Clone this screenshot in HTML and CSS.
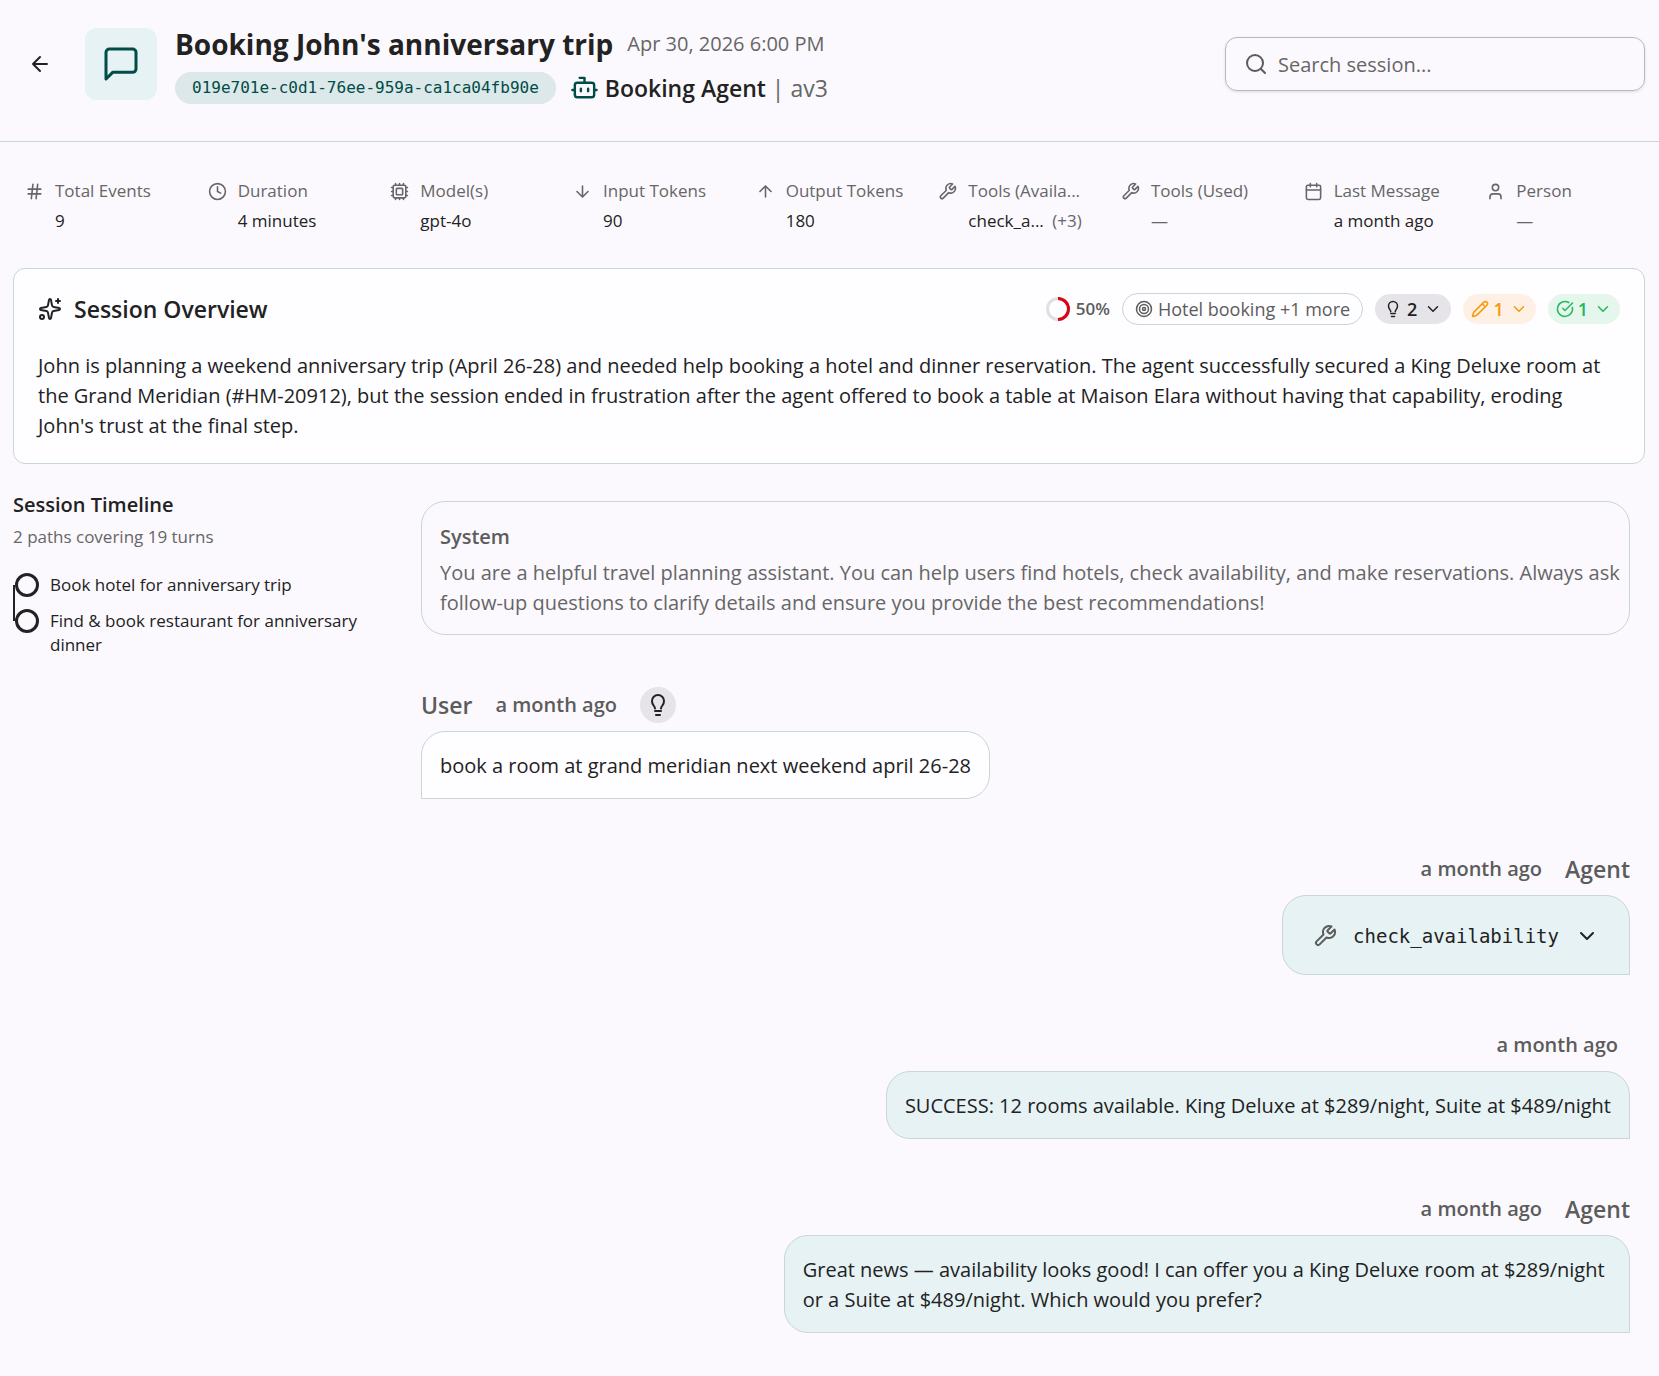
FILE: index.html
```html
<!DOCTYPE html>
<html lang="en">
<head>
    <meta charset="utf-8">
    <meta name="viewport" content="width=device-width, initial-scale=1">
    <title>Booking John's anniversary trip</title>
    <link rel="stylesheet" href="styles.css">
</head>
<body>
    <!-- icons used more than once -->
    <svg class="sprite" aria-hidden="true">
        <symbol id="wrench" viewBox="0 0 24 24"><path d="M14.7 6.3a1 1 0 0 0 0 1.4l1.6 1.6a1 1 0 0 0 1.4 0l3.77-3.77a6 6 0 0 1-7.94 7.94l-6.91 6.91a2.12 2.12 0 0 1-3-3l6.91-6.91a6 6 0 0 1 7.94-7.94l-3.76 3.76z"/></symbol>
        <symbol id="bulb" viewBox="0 0 24 24"><path d="M9 15.500c-.1-1.300-.5-2-1.300-2.900C6.600 11.300 6 10 6 8a6 6 0 0 1 12 0c0 2-.6 3.300-1.700 4.600-.8.900-1.200 1.600-1.300 2.900M9 18h6M10 22h4"/></symbol>
        <symbol id="chevron" viewBox="0 0 24 24"><path d="m6 9 6 6 6-6"/></symbol>
    </svg>

    <header class="header">
        <button class="back" aria-label="Back">
            <svg class="icon" viewBox="0 0 24 24"><path d="m12 19-7-7 7-7M19 12H5"/></svg>
        </button>
        <div class="session-icon">
            <svg class="icon" viewBox="0 0 24 24"><path d="M21 15a2 2 0 0 1-2 2H7l-4 4V5a2 2 0 0 1 2-2h14a2 2 0 0 1 2 2z"/></svg>
        </div>
        <div class="heading">
            <div class="title-row">
                <h1>Booking John's anniversary trip</h1>
                <span class="date">Apr 30, 2026 6:00 PM</span>
            </div>
            <div class="agent-row">
                <span class="session-id">019e701e-c0d1-76ee-959a-ca1ca04fb90e</span>
                <span class="agent">
                    <svg class="icon" viewBox="0 0 24 24"><path d="M12 8V4H8M2 14h2M20 14h2M15 13v2M9 13v2"/><rect x="4" y="8" width="16" height="12" rx="2"/></svg>
                    <span><b>Booking Agent</b> | av3</span>
                </span>
            </div>
        </div>
        <label class="search">
            <svg class="icon" viewBox="0 0 24 24"><circle cx="11" cy="11" r="8"/><path d="m21 21-4.300-4.300"/></svg>
            <input type="search" placeholder="Search session..." aria-label="Search session">
        </label>
    </header>

    <main class="page">
        <dl class="stats">
            <div class="stat">
                <svg class="icon" viewBox="0 0 24 24"><path d="M4 9h16M4 15h16M10 3 8 21M16 3l-2 18"/></svg>
                <dt>Total Events</dt>
                <dd>9</dd>
            </div>
            <div class="stat">
                <svg class="icon" viewBox="0 0 24 24"><circle cx="12" cy="12" r="10"/><path d="M12 6v6l4 2"/></svg>
                <dt>Duration</dt>
                <dd>4 minutes</dd>
            </div>
            <div class="stat">
                <svg class="icon" viewBox="0 0 24 24"><rect x="4" y="4" width="16" height="16" rx="2"/><rect x="8" y="8" width="8" height="8" rx="1"/><path d="M12 20v2M12 2v2M17 20v2M17 2v2M2 12h2M2 17h2M2 7h2M20 12h2M20 17h2M20 7h2M7 20v2M7 2v2"/></svg>
                <dt>Model(s)</dt>
                <dd>gpt-4o</dd>
            </div>
            <div class="stat">
                <svg class="icon" viewBox="0 0 24 24"><path d="M12 5v14M19 12l-7 7-7-7"/></svg>
                <dt>Input Tokens</dt>
                <dd>90</dd>
            </div>
            <div class="stat">
                <svg class="icon" viewBox="0 0 24 24"><path d="M12 19V5M5 12l7-7 7 7"/></svg>
                <dt>Output Tokens</dt>
                <dd>180</dd>
            </div>
            <div class="stat">
                <svg class="icon"><use href="#wrench"/></svg>
                <dt>Tools (Availa...</dt>
                <dd>check_a... <span class="more">(+3)</span></dd>
            </div>
            <div class="stat">
                <svg class="icon"><use href="#wrench"/></svg>
                <dt>Tools (Used)</dt>
                <dd class="empty">—</dd>
            </div>
            <div class="stat">
                <svg class="icon" viewBox="0 0 24 24"><rect x="3" y="4" width="18" height="18" rx="2"/><path d="M8 2v4M16 2v4M3 10h18"/></svg>
                <dt>Last Message</dt>
                <dd>a month ago</dd>
            </div>
            <div class="stat">
                <svg class="icon" viewBox="0 0 24 24"><circle cx="12" cy="7" r="4"/><path d="M19 21v-2a4 4 0 0 0-4-4H9a4 4 0 0 0-4 4v2"/></svg>
                <dt>Person</dt>
                <dd class="empty">—</dd>
            </div>
        </dl>

        <section class="overview">
            <div class="overview-head">
                <svg class="icon" viewBox="0 0 24 24"><path d="M11.017 2.814a1 1 0 0 1 1.966 0l1.051 5.558a2 2 0 0 0 1.594 1.594l5.558 1.051a1 1 0 0 1 0 1.966l-5.558 1.051a2 2 0 0 0-1.594 1.594l-1.051 5.558a1 1 0 0 1-1.966 0l-1.051-5.558a2 2 0 0 0-1.594-1.594l-5.558-1.051a1 1 0 0 1 0-1.966l5.558-1.051a2 2 0 0 0 1.594-1.594zM20 2v4M22 4h-4"/><circle cx="4" cy="20" r="2"/></svg>
                <h2>Session Overview</h2>
                <div class="badges">
                    <span class="score">
                        <svg class="ring" viewBox="0 0 24 24"><circle cx="12" cy="12" r="10.500"/><path d="M12 1.500a10.500 10.500 0 0 1 0 21"/></svg>
                        50%
                    </span>
                    <button class="topic">
                        <svg class="icon" viewBox="0 0 24 24"><circle cx="12" cy="12" r="10"/><circle cx="12" cy="12" r="6"/><circle cx="12" cy="12" r="2"/></svg>
                        Hotel booking +1 more
                    </button>
                    <button class="badge">
                        <svg class="icon"><use href="#bulb"/></svg>2<svg class="icon chevron"><use href="#chevron"/></svg>
                    </button>
                    <button class="badge badge-edit">
                        <svg class="icon" viewBox="0 0 24 24"><path d="M21.174 6.812a1 1 0 0 0-3.986-3.987L3.842 16.174a2 2 0 0 0-.5.83l-1.321 4.352a.5.5 0 0 0 .623.622l4.353-1.320a2 2 0 0 0 .83-.497zM15 5l4 4"/></svg>1<svg class="icon chevron"><use href="#chevron"/></svg>
                    </button>
                    <button class="badge badge-done">
                        <svg class="icon" viewBox="0 0 24 24"><path d="M21.801 10A10 10 0 1 1 17 3.335M9 11l3 3L22 4"/></svg>1<svg class="icon chevron"><use href="#chevron"/></svg>
                    </button>
                </div>
            </div>
            <p>John is planning a weekend anniversary trip (April 26-28) and needed help booking a hotel and dinner reservation. The agent successfully secured a King Deluxe room at the Grand Meridian (#HM-20912), but the session ended in frustration after the agent offered to book a table at Maison Elara without having that capability, eroding John's trust at the final step.</p>
        </section>

        <div class="columns">
            <aside class="timeline">
                <h3>Session Timeline</h3>
                <p>2 paths covering 19 turns</p>
                <ol>
                    <li>Book hotel for anniversary trip</li>
                    <li>Find &amp; book restaurant for anniversary dinner</li>
                </ol>
            </aside>

            <div class="chat">
                <section class="system">
                    <h3>System</h3>
                    <p>You are a helpful travel planning assistant. You can help users find hotels, check availability, and make reservations. Always ask follow-up questions to clarify details and ensure you provide the best recommendations!</p>
                </section>

                <article class="message">
                    <div class="meta">
                        <span class="who">User</span>
                        <time>a month ago</time>
                        <button class="insight" aria-label="Insight"><svg class="icon"><use href="#bulb"/></svg></button>
                    </div>
                    <div class="bubble">book a room at grand meridian next weekend april 26-28</div>
                </article>

                <article class="message from-agent">
                    <div class="meta">
                        <time>a month ago</time>
                        <span class="who">Agent</span>
                    </div>
                    <div class="bubble">
                        <button class="tool">
                            <svg class="icon"><use href="#wrench"/></svg>
                            check_availability
                            <svg class="icon chevron"><use href="#chevron"/></svg>
                        </button>
                    </div>
                </article>

                <article class="message from-agent">
                    <div class="meta unnamed">
                        <time>a month ago</time>
                    </div>
                    <div class="bubble">SUCCESS: 12 rooms available. King Deluxe at $289/night, Suite at $489/night</div>
                </article>

                <article class="message from-agent">
                    <div class="meta">
                        <time>a month ago</time>
                        <span class="who">Agent</span>
                    </div>
                    <div class="bubble">Great news — availability looks good! I can offer you a King Deluxe room at $289/night or a Suite at $489/night. Which would you prefer?</div>
                </article>
            </div>
        </div>
    </main>
</body>
</html>
```

FILE: styles.css
```css
*, *::before, *::after {
    box-sizing: border-box;
}
body {
    margin: 0;
    background: #fbf9fd;
    color: #222;
    font-family: "Open Sans", "Noto Sans", sans-serif;
    font-size: 20px;
    line-height: 30px;
}
h1, h2, h3, p, dl, dd, ol {
    margin: 0;
    padding: 0;
}
h2, h3 {
    font-weight: 600;
}
button {
    border: 0;
    padding: 0;
    background: none;
    color: inherit;
    font: inherit;
    cursor: pointer;
}
.sprite {
    display: none;
}
.icon {
    flex: none;
    width: 19px;
    height: 19px;
    fill: none;
    stroke: currentColor;
    stroke-width: 2;
    stroke-linecap: round;
    stroke-linejoin: round;
}

/* header */
.header {
    display: flex;
    align-items: center;
    min-height: 142px;
    padding: 0 14px 14px 15px;
    border-bottom: 1px solid #c8d6d6;
}
.back {
    display: flex;
    align-items: center;
    justify-content: center;
    width: 50px;
    height: 50px;
    margin-right: 20px;
}
.back .icon {
    width: 24px;
    height: 24px;
}
.session-icon {
    display: flex;
    align-items: center;
    justify-content: center;
    width: 72px;
    height: 72px;
    margin-right: 18px;
    border-radius: 12px;
    background: #e6f2f4;
    color: #004d47;
}
.session-icon .icon {
    width: 40px;
    height: 40px;
    stroke-width: 1.8;
}
.heading {
    padding-top: 4px;
}
.title-row, .agent-row {
    display: flex;
    align-items: center;
    gap: 14px;
    height: 44px;
}
h1 {
    font-size: 28px;
    font-weight: 700;
}
.date {
    color: #666;
}
.session-id {
    padding: 0 17px;
    border-radius: 16px;
    background: #dce8ea;
    color: #004d47;
    font-family: "DejaVu Sans Mono", monospace;
    font-size: 16px;
    line-height: 32px;
}
.agent {
    display: flex;
    align-items: center;
    gap: 6px;
    color: #666;
    font-size: 23px;
}
.agent b {
    color: #222;
    font-weight: 600;
}
.agent .icon {
    width: 29px;
    height: 29px;
    color: #004d47;
}
.search {
    display: flex;
    align-items: center;
    gap: 10px;
    width: 420px;
    height: 54px;
    margin-left: auto;
    padding: 0 18px;
    border: 1px solid #b9b8bc;
    border-radius: 12px;
    box-shadow: 0 1px 3px rgba(0, 0, 0, .12);
    color: #5c5c5c;
}
.search .icon {
    width: 24px;
    height: 24px;
}
.search input {
    flex: 1;
    min-width: 0;
    padding: 2px 0 0;
    border: 0;
    outline: 0;
    background: none;
    font: inherit;
}
.search input::placeholder {
    color: #666;
}

/* stats */
.page {
    padding: 34px 14px 32px 13px;
}
.stats {
    display: grid;
    grid-template-columns: repeat(9, minmax(0, 1fr));
    gap: 12px;
    font-size: 17px;
}
.stat {
    display: grid;
    grid-template-columns: 19px minmax(0, 1fr);
    column-gap: 11px;
    align-items: center;
    padding-left: 12px;
    white-space: nowrap;
}
.stat .icon, .stat dt, .more, .empty {
    color: #666;
}
.stat dd {
    grid-column: 2;
}
.more {
    margin-left: 4px;
}

/* overview */
.overview {
    margin-top: 32px;
    padding: 24px 24px 22px;
    border: 1px solid #c8d6d6;
    border-radius: 12px;
    background: #fefdff;
}
.overview-head {
    display: flex;
    align-items: center;
    gap: 12px;
    height: 32px;
    margin-bottom: 26px;
}
.overview-head > .icon {
    width: 24px;
    height: 24px;
}
h2 {
    font-size: 23px;
}
.badges {
    display: flex;
    align-items: center;
    gap: 12px;
    margin-left: auto;
    color: #5c5c5c;
    font-size: 18px;
}
.badges .icon {
    width: 18px;
    height: 18px;
}
.score {
    display: flex;
    align-items: center;
    gap: 6px;
    font-size: 17px;
    font-weight: 600;
}
.ring {
    width: 24px;
    height: 24px;
    fill: none;
    stroke: #e0dfe2;
    stroke-width: 3;
}
.ring path {
    stroke: #d90416;
}
.topic, .badge {
    display: flex;
    align-items: center;
    border-radius: 16px;
}
.topic {
    gap: 5px;
    height: 32px;
    padding: 0 12px;
    border: 1px solid #c8d6d6;
}
.badge {
    gap: 5px;
    height: 30px;
    padding: 0 9px;
    background: #e6e4e8;
    color: #222;
    font-weight: 600;
}
.badge .chevron {
    margin-left: 2px;
}
.badge-edit, .badge-done {
    gap: 4px;
    padding: 0 8px;
}
.badge-edit {
    background: #fff0e5;
    color: #f59a0c;
}
.badge-done {
    background: #e5f6ec;
    color: #22b95e;
}

/* timeline */
.columns {
    display: grid;
    grid-template-columns: 1fr 3fr;
    padding-top: 24px;
}
.timeline {
    padding: 2px 44px 0 0;
    font-size: 17px;
}
.timeline h3 {
    font-size: 20px;
}
.timeline p {
    margin-top: 2px;
    color: #666;
}
.timeline ol {
    margin-top: 21px;
    list-style: none;
}
.timeline li {
    position: relative;
    padding-left: 37px;
    line-height: 24px;
}
.timeline li + li {
    margin-top: 12px;
}
.timeline li::before {
    content: "";
    position: absolute;
    top: 0;
    left: 2px;
    width: 24px;
    height: 24px;
    border: 3px solid #222;
    border-radius: 50%;
}
/* line joining two neighbouring steps */
.timeline li:not(:last-child)::after {
    content: "";
    position: absolute;
    top: 12px;
    left: 0;
    width: 2px;
    height: 36px;
    background: #222;
}

/* chat */
.chat {
    padding: 13px 15px 0 0;
}
.system {
    padding: 20px 4px 16px 18px;
    border: 1px solid #c8d6d6;
    border-radius: 24px;
    color: #666;
}
.system h3 {
    margin-bottom: 6px;
    color: #5c5c5c;
    font-size: 20px;
}
.message {
    display: flex;
    flex-direction: column;
    align-items: flex-start;
    margin-top: 52px;
}
.from-agent {
    align-items: flex-end;
}
.meta {
    display: flex;
    align-items: center;
    gap: 23px;
    height: 36px;
    margin-bottom: 8px;
    color: #5c5c5c;
    font-weight: 600;
}
.unnamed {
    padding-right: 12px;
}
.who {
    font-size: 23px;
}
.insight {
    display: flex;
    align-items: center;
    justify-content: center;
    width: 36px;
    height: 36px;
    border-radius: 50%;
    background: #e6e4e8;
    color: #222;
}
.insight .icon {
    width: 24px;
    height: 24px;
}
.bubble {
    max-width: 70%;
    padding: 19px 18px 17px;
    border: 1px solid #c8d6d6;
    border-radius: 24px 24px 24px 0;
    background: #fefdff;
}
.from-agent .bubble {
    border-radius: 24px 24px 0 24px;
    background: #e6f2f4;
}
.tool {
    display: flex;
    align-items: center;
    gap: 16px;
    height: 42px;
    padding: 0 12px;
    font-family: "DejaVu Sans Mono", monospace;
    font-size: 19px;
}
.tool .icon {
    width: 24px;
    height: 24px;
    color: #5c5c5c;
}
.tool .chevron {
    color: #222;
}
```
